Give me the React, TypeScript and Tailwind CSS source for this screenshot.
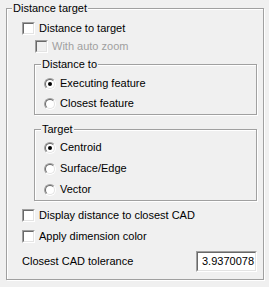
import React from "react";

function CheckBox({ disabled }: { disabled?: boolean }) {
  return (
    <div className="w-[13px] h-[13px] shrink-0 border border-t-[#a0a0a0] border-l-[#a0a0a0] border-r-white border-b-white">
      <div
        className={
          "w-full h-full border border-t-[#696969] border-l-[#696969] border-r-[#e3e3e3] border-b-[#e3e3e3] " +
          (disabled ? "bg-[#f0f0f0]" : "bg-white")
        }
      />
    </div>
  );
}

function Radio({ checked }: { checked?: boolean }) {
  return (
    <div className="w-[12px] h-[12px] shrink-0 rounded-full border border-t-[#a0a0a0] border-l-[#a0a0a0] border-r-white border-b-white">
      <div className="w-full h-full rounded-full border border-t-[#696969] border-l-[#696969] border-r-[#e3e3e3] border-b-[#e3e3e3] bg-white flex items-center justify-center">
        {checked && <div className="w-[4px] h-[4px] rounded-full bg-black" />}
      </div>
    </div>
  );
}

function CheckRow({ label, disabled, className }: { label: string; disabled?: boolean; className?: string }) {
  return (
    <div className={"flex items-center h-[13px] gap-[4px] " + (className ?? "")}>
      <CheckBox disabled={disabled} />
      <span className={"leading-[13px] whitespace-nowrap " + (disabled ? "text-[#a0a0a0]" : "text-black")}>{label}</span>
    </div>
  );
}

function RadioRow({ label, checked, className }: { label: string; checked?: boolean; className?: string }) {
  return (
    <div className={"flex items-center h-[13px] gap-[4px] " + (className ?? "")}>
      <Radio checked={checked} />
      <span className="leading-[13px] whitespace-nowrap">{label}</span>
    </div>
  );
}

function Group({ title, className, children, titleLeft }: { title: string; className?: string; children: React.ReactNode; titleLeft: string }) {
  return (
    <div className={"relative border border-[#a0a0a0] shadow-[inset_1px_1px_0_#ffffff,1px_1px_0_#ffffff] " + (className ?? "")}>
      <span className={"absolute top-[-7px] px-[1px] bg-[#f0f0f0] leading-[13px] whitespace-nowrap " + titleLeft}>{title}</span>
      {children}
    </div>
  );
}

export default function App() {
  return (
    <div
      className="w-[269px] h-[287px] bg-[#f0f0f0] pl-[6px] pt-[8px] text-[11px] text-black overflow-hidden"
      style={{ fontFamily: '"Liberation Sans", Arial, sans-serif' }}
    >
      <Group title="Distance target" titleLeft="left-[5px]" className="w-[258px] h-[272px] pl-[15px] pr-[6px] flex flex-col">
        <CheckRow label="Distance to target" className="mt-[13px]" />
        <CheckRow label="With auto zoom" disabled className="mt-[5px] ml-[13px]" />
        <Group title="Distance to" titleLeft="left-[6px]" className="mt-[11px] ml-[12px] h-[51px] pl-[9px] flex flex-col">
          <RadioRow label="Executing feature" checked className="mt-[12px]" />
          <RadioRow label="Closest feature" className="mt-[7px]" />
        </Group>
        <Group title="Target" titleLeft="left-[6px]" className="mt-[14px] ml-[12px] h-[72px] pl-[9px] flex flex-col">
          <RadioRow label="Centroid" checked className="mt-[11px]" />
          <RadioRow label="Surface/Edge" className="mt-[8px]" />
          <RadioRow label="Vector" className="mt-[8px]" />
        </Group>
        <CheckRow label="Display distance to closest CAD" className="mt-[8px]" />
        <CheckRow label="Apply dimension color" className="mt-[8px]" />
        <div className="mt-[8px] flex items-center justify-between h-[21px]">
          <span className="leading-[13px] whitespace-nowrap">Closest CAD tolerance</span>
          <div className="w-[61px] h-[21px] border border-t-[#a0a0a0] border-l-[#a0a0a0] border-r-white border-b-white">
            <div className="w-full h-full border border-t-[#696969] border-l-[#696969] border-r-[#e3e3e3] border-b-[#e3e3e3] bg-white overflow-hidden flex items-center pl-[4px]">
              <span className="leading-[13px] whitespace-nowrap">3.9370078</span>
            </div>
          </div>
        </div>
      </Group>
    </div>
  );
}
